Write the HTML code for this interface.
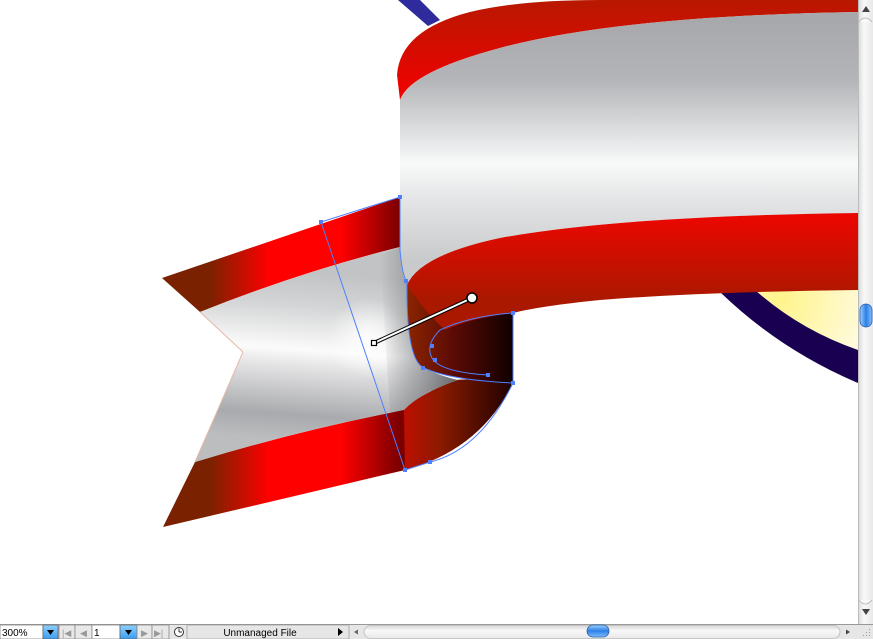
<!DOCTYPE html>
<html><head><meta charset="utf-8">
<style>
html,body{margin:0;padding:0;background:#fff;width:873px;height:639px;overflow:hidden;font-family:"Liberation Sans",sans-serif;}
svg{display:block}
</style></head>
<body>
<svg width="873" height="639" viewBox="0 0 873 639" xmlns="http://www.w3.org/2000/svg">
<defs>
  <linearGradient id="redH" x1="162" y1="0" x2="400" y2="0" gradientUnits="userSpaceOnUse">
    <stop offset="0" stop-color="#7a2200"/>
    <stop offset="0.2" stop-color="#7a2200"/>
    <stop offset="0.45" stop-color="#ff0000"/>
    <stop offset="0.75" stop-color="#ff0000"/>
    <stop offset="1" stop-color="#7a0000"/>
  </linearGradient>
  <linearGradient id="silL" x1="300" y1="272" x2="288" y2="440" gradientUnits="userSpaceOnUse">
    <stop offset="0" stop-color="#c2c3c5"/>
    <stop offset="0.2" stop-color="#d4d5d6"/>
    <stop offset="0.46" stop-color="#fbfbfb"/>
    <stop offset="0.55" stop-color="#e6e6e7"/>
    <stop offset="0.85" stop-color="#a9aaad"/>
    <stop offset="1" stop-color="#bcbdbf"/>
  </linearGradient>
  <radialGradient id="glow" cx="368" cy="338" r="40" gradientUnits="userSpaceOnUse">
    <stop offset="0" stop-color="#fff" stop-opacity="0.9"/>
    <stop offset="1" stop-color="#fff" stop-opacity="0"/>
  </radialGradient>
  <linearGradient id="shadeR" x1="380" y1="0" x2="460" y2="0" gradientUnits="userSpaceOnUse">
    <stop offset="0" stop-color="#606266" stop-opacity="0"/>
    <stop offset="0.4" stop-color="#606266" stop-opacity="0.4"/>
    <stop offset="1" stop-color="#404246" stop-opacity="0.8"/>
  </linearGradient>
  <linearGradient id="silM" x1="0" y1="20" x2="0" y2="260" gradientUnits="userSpaceOnUse">
    <stop offset="0" stop-color="#a7a8ac"/>
    <stop offset="0.25" stop-color="#b4b5b8"/>
    <stop offset="0.6" stop-color="#f8f9f9"/>
    <stop offset="0.75" stop-color="#e4e5e6"/>
    <stop offset="1" stop-color="#c9cacc"/>
  </linearGradient>
  <linearGradient id="redTop" x1="0" y1="0" x2="0" y2="100" gradientUnits="userSpaceOnUse">
    <stop offset="0" stop-color="#b81800"/>
    <stop offset="1" stop-color="#f40000"/>
  </linearGradient>
  <linearGradient id="redBot" x1="0" y1="220" x2="0" y2="300" gradientUnits="userSpaceOnUse">
    <stop offset="0" stop-color="#e80800"/>
    <stop offset="1" stop-color="#aa1800"/>
  </linearGradient>
  <linearGradient id="dark" x1="405" y1="0" x2="515" y2="0" gradientUnits="userSpaceOnUse">
    <stop offset="0" stop-color="#8e2600"/>
    <stop offset="0.45" stop-color="#5a0a04"/>
    <stop offset="1" stop-color="#0c0000"/>
  </linearGradient>
  <linearGradient id="darkLow" x1="380" y1="0" x2="515" y2="0" gradientUnits="userSpaceOnUse">
    <stop offset="0" stop-color="#e00800"/>
    <stop offset="0.45" stop-color="#8a1a00"/>
    <stop offset="1" stop-color="#1a0000"/>
  </linearGradient>
  <radialGradient id="yel" cx="780" cy="300" r="100" gradientUnits="userSpaceOnUse">
    <stop offset="0" stop-color="#fff48a"/>
    <stop offset="1" stop-color="#fffbe8"/>
  </radialGradient>
  <linearGradient id="vbar" x1="0" y1="0" x2="1" y2="0">
    <stop offset="0" stop-color="#d8d8d8"/><stop offset="0.4" stop-color="#f8f8f8"/><stop offset="1" stop-color="#e8e8e8"/>
  </linearGradient>
  <linearGradient id="hbar" x1="0" y1="0" x2="0" y2="1">
    <stop offset="0" stop-color="#d8d8d8"/><stop offset="0.4" stop-color="#f8f8f8"/><stop offset="1" stop-color="#e8e8e8"/>
  </linearGradient>
  <linearGradient id="thumb" x1="0" y1="0" x2="0" y2="1">
    <stop offset="0" stop-color="#9cd0ff"/><stop offset="0.5" stop-color="#2d7fe6"/><stop offset="1" stop-color="#7fc0ff"/>
  </linearGradient>
  <linearGradient id="thumbV" x1="0" y1="0" x2="1" y2="0">
    <stop offset="0" stop-color="#9cd0ff"/><stop offset="0.5" stop-color="#2d7fe6"/><stop offset="1" stop-color="#7fc0ff"/>
  </linearGradient>
  <linearGradient id="btnB" x1="0" y1="0" x2="0" y2="1">
    <stop offset="0" stop-color="#8fd0ff"/><stop offset="1" stop-color="#3a9cf0"/>
  </linearGradient>
</defs>

<path d="M398 0 L420 0 L440 20 L428 26 Z" fill="#2f2b9c"/>
<path d="M755 290 Q800 330 858 350 L858 290 Z" fill="url(#yel)"/>
<path d="M720 292 L755 290 Q800 330 858 350 L858 383 Q780 350 720 292 Z" fill="#1a0050"/>

<path d="M162 278 L400 197 L400 247 Q300 272 200 312 Z" fill="url(#redH)"/>
<path d="M395 412 Q430 390 455 380 Q480 378 513 383 Q480 450 405 470 Z" fill="url(#darkLow)"/>
<path d="M195 462 Q300 430 404 410 L405 470 L163 527 Z" fill="url(#redH)"/>
<path d="M407 282 L513 280 L513 383 Q450 380 424 368 Q406 360 407 282 Z" fill="url(#dark)"/>
<path d="M200 312 Q300 272 400 247 L403 270 Q404 275 407 282 Q406 360 424 368 Q440 376 458 380 Q420 393 404 410 Q300 430 195 462 L243 352 Z" fill="url(#silL)"/>
<circle cx="368" cy="338" r="40" fill="url(#glow)"/>
<path d="M380 255 L400 247 L403 270 Q404 275 407 282 Q406 360 424 368 Q440 376 458 380 Q420 393 404 410 L390 413 Z" fill="url(#shadeR)"/>
<path d="M243 352 L200 312" stroke="#e8b8a8" stroke-width="1" fill="none"/>
<path d="M243 352 L195 462" stroke="#e8b8a8" stroke-width="1" fill="none"/>

<path d="M397 75 Q400 30 470 12 Q520 0 600 0 L858 0 L858 12 Q620 16 500 48 Q410 72 400 100 Z" fill="url(#redTop)"/>
<path d="M400 100 Q410 72 500 48 Q620 16 858 12 L858 213 Q620 216 500 238 Q420 255 407 285 Q400 270 400 250 Z" fill="url(#silM)"/>
<path d="M407 285 Q420 255 500 238 Q620 216 858 213 L858 290 Q700 292 600 300 Q540 306 513 313 Q470 318 445 330 Q425 312 407 285 Z" fill="url(#redBot)"/>

<g fill="none" stroke="#4f7fff" stroke-width="1">
  <path d="M321 222 L405 470"/>
  <path d="M321 222 L400 197 L400 250 Q402 275 407 282 Q406 360 424 368 Q450 380 513 383 L513 313 Q470 316 440 330 Q425 345 432 358 Q440 372 488 375"/>
  <path d="M513 383 Q480 450 430 462 L405 470"/>
</g>
<g fill="#4f7fff">
  <rect x="319" y="220" width="4" height="4"/><rect x="398" y="195" width="4" height="4"/>
  <rect x="404" y="279" width="4" height="4"/><rect x="421" y="366" width="4" height="4"/>
  <rect x="430" y="344" width="4" height="4"/><rect x="433" y="358" width="4" height="4"/>
  <rect x="486" y="373" width="4" height="4"/><rect x="511" y="311" width="4" height="4"/>
  <rect x="511" y="381" width="4" height="4"/><rect x="428" y="460" width="4" height="4"/>
  <rect x="403" y="468" width="4" height="4"/>
</g>
<path d="M374 343 L472 298" stroke="#000" stroke-width="4"/>
<path d="M374 343 L472 298" stroke="#fff" stroke-width="2"/>
<circle cx="472" cy="298" r="5" fill="#fff" stroke="#000" stroke-width="1.5"/>
<rect x="371.5" y="340.5" width="5" height="5" fill="#fff" stroke="#000" stroke-width="1.2"/>

<rect x="858" y="0" width="15" height="624" fill="url(#vbar)"/>
<line x1="858.5" y1="0" x2="858.5" y2="624" stroke="#bbb"/>
<path d="M862 12 L866 6 L870 12 Z" fill="#444"/>
<path d="M859 22 Q865 14 872 22" fill="#fafafa" stroke="#bbb"/>
<rect x="860" y="304" width="12" height="23" rx="6" fill="url(#thumbV)" stroke="#2a5ea8" stroke-width="0.8"/>
<path d="M859 600 Q865 608 872 600" fill="#fafafa" stroke="#bbb"/>
<path d="M862 609 L866 615 L870 609 Z" fill="#444"/>

<rect x="0" y="624" width="873" height="15" fill="#e6e6e6"/>
<line x1="0" y1="624.5" x2="873" y2="624.5" stroke="#999"/>
<rect x="0" y="625" width="43" height="14" fill="#fff" stroke="#888" stroke-width="0.8"/>
<text x="2" y="636" font-size="10" fill="#000">300%</text>
<rect x="43" y="625" width="15" height="14" fill="url(#btnB)" stroke="#666" stroke-width="0.8"/>
<path d="M47 630 L54 630 L50.5 635 Z" fill="#000"/>
<rect x="59" y="625" width="16" height="14" fill="#e8e8e8" stroke="#888" stroke-width="0.8"/>
<text x="62" y="636" font-size="9" fill="#999">|◀</text>
<rect x="75" y="625" width="17" height="14" fill="#e8e8e8" stroke="#888" stroke-width="0.8"/>
<text x="80" y="636" font-size="9" fill="#999">◀</text>
<rect x="92" y="625" width="28" height="14" fill="#fff" stroke="#888" stroke-width="0.8"/>
<text x="94" y="636" font-size="10" fill="#000">1</text>
<rect x="120" y="625" width="17" height="14" fill="url(#btnB)" stroke="#666" stroke-width="0.8"/>
<path d="M125 630 L132 630 L128.5 635 Z" fill="#000"/>
<rect x="137" y="625" width="15" height="14" fill="#e8e8e8" stroke="#888" stroke-width="0.8"/>
<text x="141" y="636" font-size="9" fill="#999">▶</text>
<rect x="152" y="625" width="17" height="14" fill="#e8e8e8" stroke="#888" stroke-width="0.8"/>
<text x="154" y="636" font-size="9" fill="#999">▶|</text>
<circle cx="179" cy="632" r="4.5" fill="#fff" stroke="#333" stroke-width="1"/>
<path d="M179 632 L179 628.5 M179 632 L182 632" stroke="#333" stroke-width="1"/>
<rect x="187" y="625" width="162" height="14" fill="#e6e6e6" stroke="#888" stroke-width="0.6"/>
<text x="260" y="636" font-size="10" text-anchor="middle" fill="#000">Unmanaged File</text>
<path d="M338 628 L343 632 L338 636 Z" fill="#000"/>
<path d="M354 632 L358 629.5 L358 634.5 Z" fill="#666"/>
<rect x="364" y="625.5" width="476" height="13" rx="6.5" fill="url(#hbar)" stroke="#bbb" stroke-width="0.8"/>
<rect x="587" y="625" width="22" height="12" rx="6" fill="url(#thumb)" stroke="#2a5ea8" stroke-width="0.8"/>
<path d="M846 629.5 L850 632 L846 634.5 Z" fill="#444"/>
<g fill="#999"><rect x="869" y="635" width="1" height="1"/><rect x="866" y="635" width="1" height="1"/><rect x="869" y="632" width="1" height="1"/><rect x="863" y="635" width="1" height="1"/><rect x="866" y="632" width="1" height="1"/><rect x="869" y="629" width="1" height="1"/></g>
</svg>
</body></html>
